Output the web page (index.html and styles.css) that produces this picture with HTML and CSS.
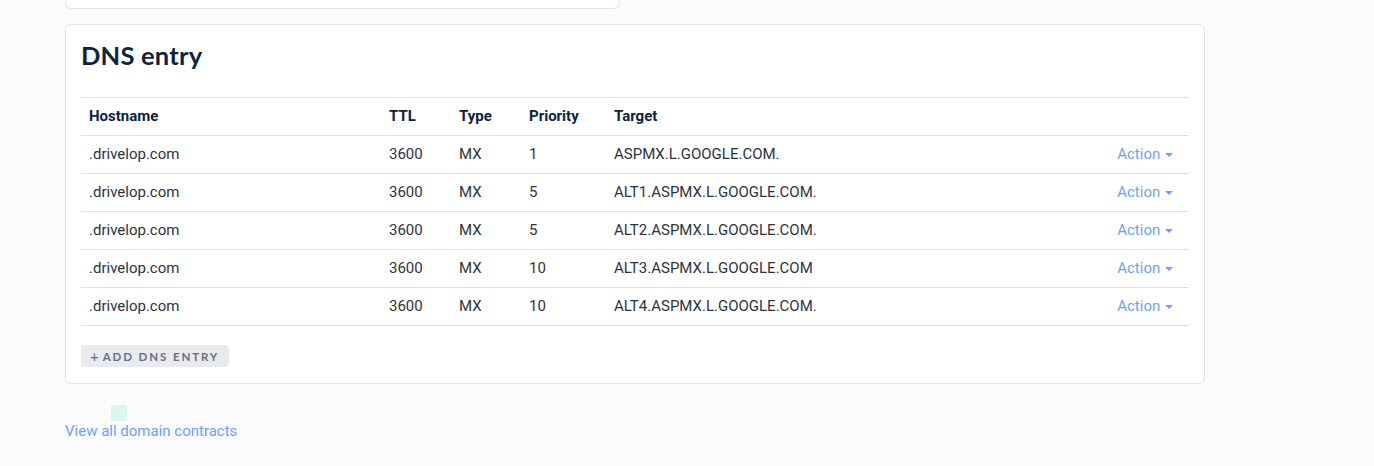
FILE: index.html
```html
<!DOCTYPE html>
<html>
<head>
<meta charset="utf-8">
<link rel="stylesheet" href="styles.css">
</head>
<body>
<div class="page">
  <div class="card card-top"></div>
  <div class="card card-dns">
    <h2 class="title">DNS entry</h2>
    <table class="dns">
      <thead>
        <tr><th class="c-host">Hostname</th><th class="c-ttl">TTL</th><th class="c-type">Type</th><th class="c-prio">Priority</th><th class="c-target">Target</th><th class="c-act"></th></tr>
      </thead>
      <tbody>
        <tr><td>.drivelop.com</td><td>3600</td><td>MX</td><td>1</td><td>ASPMX.L.GOOGLE.COM.</td><td class="c-act"><a class="action">Action <span class="caret"></span></a></td></tr>
        <tr><td>.drivelop.com</td><td>3600</td><td>MX</td><td>5</td><td>ALT1.ASPMX.L.GOOGLE.COM.</td><td class="c-act"><a class="action">Action <span class="caret"></span></a></td></tr>
        <tr><td>.drivelop.com</td><td>3600</td><td>MX</td><td>5</td><td>ALT2.ASPMX.L.GOOGLE.COM.</td><td class="c-act"><a class="action">Action <span class="caret"></span></a></td></tr>
        <tr><td>.drivelop.com</td><td>3600</td><td>MX</td><td>10</td><td>ALT3.ASPMX.L.GOOGLE.COM</td><td class="c-act"><a class="action">Action <span class="caret"></span></a></td></tr>
        <tr><td>.drivelop.com</td><td>3600</td><td>MX</td><td>10</td><td>ALT4.ASPMX.L.GOOGLE.COM.</td><td class="c-act"><a class="action">Action <span class="caret"></span></a></td></tr>
      </tbody>
    </table>
    <button class="add-btn"><span class="plus">+</span>ADD DNS ENTRY</button>
  </div>
  <div class="footer">
    <span class="marker"></span>
    <a class="view-all">View all domain contracts</a>
  </div>
</div>
</body>
</html>
```
FILE: styles.css
```css
html, body {
  margin: 0;
  padding: 0;
  background: #fbfbfe;
}
body {
  font-family: Roboto, "Liberation Sans", sans-serif;
  width: 1374px;
  height: 466px;
  overflow: hidden;
}
.page {
  padding-left: 65px;
  display: flex;
  flex-direction: column;
  align-items: flex-start;
}
.card {
  background: #fff;
  border: 1px solid #e3e4e8;
  border-radius: 6px;
  box-sizing: border-box;
}
.card-top {
  width: 555px;
  height: 30px;
  margin-top: -21px;
  border-top: none;
  border-radius: 0 0 6px 6px;
}
.card-dns {
  margin-top: 15px;
  width: 1140px;
  padding: 15px 15px 16px 15px;
}
.title {
  margin: 0;
  font-family: Lato, "Noto Sans", sans-serif;
  font-weight: 700;
  font-size: 25.5px;
  line-height: 30px;
  color: #0d2340;
  letter-spacing: 0.2px;
}
.dns {
  margin-top: 27px;
  width: 100%;
  border-collapse: collapse;
  font-size: 15px;
}
.dns th, .dns td {
  height: 35px;
  padding: 0 8px 2px 8px;
  text-align: left;
  border-top: 1px solid #dfe0e4;
  vertical-align: middle;
}
.dns tr:last-child td {
  border-bottom: 1px solid #dfe0e4;
}
.dns th {
  font-weight: 700;
  color: #0d2340;
}
.dns td {
  color: #2c3440;
}
.c-host { width: 284px; }
.c-ttl { width: 54px; }
.c-type { width: 54px; }
.c-prio { width: 69px; }
.dns .c-act {
  text-align: right;
  padding-right: 16px;
}
.action {
  color: #6f9ff8;
  cursor: pointer;
}
.caret {
  display: inline-block;
  width: 0;
  height: 0;
  border-left: 4px solid transparent;
  border-right: 4px solid transparent;
  border-top: 4px solid #6f9ff8;
  vertical-align: middle;
  margin-left: 1px;
}
.add-btn {
  margin-top: 19px;
  height: 22px;
  padding: 0 10px 0 9px;
  background: #e9eaee;
  border: none;
  border-radius: 3px;
  font-family: Lato, "Noto Sans", sans-serif;
  font-weight: 700;
  font-size: 11.5px;
  letter-spacing: 1.9px;
  color: #667085;
  display: flex;
  align-items: center;
}
.plus {
  font-weight: 400;
  font-size: 15px;
  margin-right: 4px;
  letter-spacing: 0;
  line-height: 1;
}
.footer {
  margin-top: 21px;
  display: flex;
  flex-direction: column;
  align-items: flex-start;
}
.marker {
  width: 16px;
  height: 16px;
  background: #d9f7ee;
  border-radius: 2px;
  margin-left: 46px;
}
.view-all {
  font-size: 15px;
  line-height: 20px;
  color: #6f9ff8;
  margin-top: 0;
  cursor: pointer;
}
```
